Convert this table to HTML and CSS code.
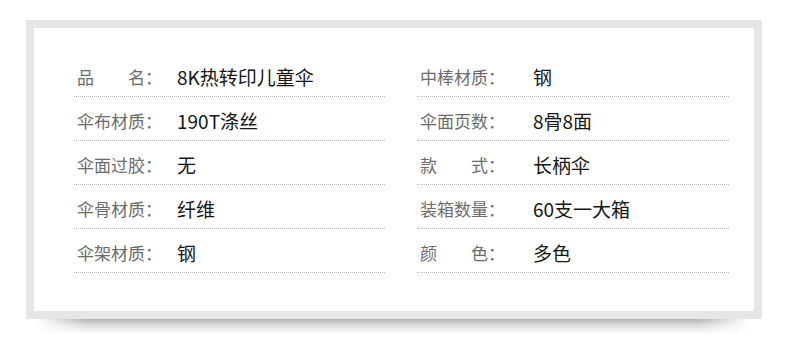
FILE: index.html
```html
<!DOCTYPE html>
<html lang="zh-CN">
<head>
<meta charset="utf-8">
<link rel="stylesheet" href="styles.css">
</head>
<body>
<div class="frame">
  <div class="sheet">
    <div class="col col-left">
      <div class="row"><span class="label"><span class="spread"><span>品</span><span>名：</span></span></span><span class="value">8K热转印儿童伞</span></div>
      <div class="row"><span class="label">伞布材质：</span><span class="value">190T涤丝</span></div>
      <div class="row"><span class="label">伞面过胶：</span><span class="value">无</span></div>
      <div class="row"><span class="label">伞骨材质：</span><span class="value">纤维</span></div>
      <div class="row"><span class="label">伞架材质：</span><span class="value">钢</span></div>
    </div>
    <div class="col col-right">
      <div class="row"><span class="label">中棒材质：</span><span class="value">钢</span></div>
      <div class="row"><span class="label">伞面页数：</span><span class="value">8骨8面</span></div>
      <div class="row"><span class="label"><span class="spread"><span>款</span><span>式：</span></span></span><span class="value">长柄伞</span></div>
      <div class="row"><span class="label">装箱数量：</span><span class="value">60支一大箱</span></div>
      <div class="row"><span class="label"><span class="spread"><span>颜</span><span>色：</span></span></span><span class="value">多色</span></div>
    </div>
  </div>
</div>
</body>
</html>
```

FILE: styles.css
```css
html, body {
  margin: 0;
  padding: 0;
  background: #ffffff;
}
body {
  font-family: "Noto Sans CJK SC", "Noto Sans", sans-serif;
  padding: 20px 0 40px 26px;
}
.frame {
  position: relative;
  width: 720px;
  border: 8px solid #e6e6e6;
  background: #ffffff;
}
.frame::after {
  content: "";
  position: absolute;
  left: 2px;
  right: 4px;
  top: calc(100% + 8px);
  height: 15px;
  background: linear-gradient(to bottom, rgba(0, 0, 0, 0.30) 0%, rgba(0, 0, 0, 0.14) 40%, rgba(0, 0, 0, 0) 100%);
  -webkit-mask-image: linear-gradient(to right, transparent 0%, #000 7%, #000 93%, transparent 100%);
  mask-image: linear-gradient(to right, transparent 0%, #000 7%, #000 93%, transparent 100%);
}
.sheet {
  height: 283px;
  box-sizing: border-box;
  padding: 25px 25px 0 40px;
  display: grid;
  grid-template-columns: 311px 312px;
  column-gap: 32px;
  align-content: start;
  background: #ffffff;
}
.row {
  display: flex;
  align-items: center;
  height: 44px;
  padding-top: 4px;
  box-sizing: border-box;
  border-bottom: 1px dotted #b4b4b4;
  line-height: 24px;
}
.label {
  display: flex;
  color: #6c6c6c;
  font-size: 17px;
  padding-left: 3px;
  box-sizing: border-box;
  flex: none;
}
.col-left .label { width: 103px; }
.col-right .label { width: 116px; }
.spread {
  display: flex;
  justify-content: space-between;
  width: 85px;
}
.value {
  color: #161616;
  font-size: 19px;
}
```
